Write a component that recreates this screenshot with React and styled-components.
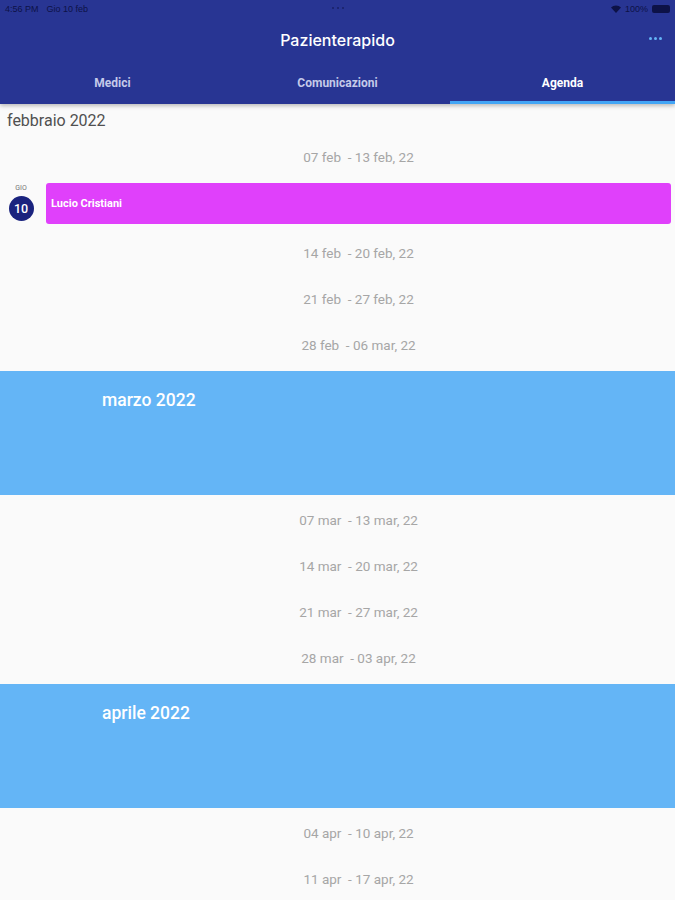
import React from "react";
import styled, { createGlobalStyle } from "styled-components";

const Global = createGlobalStyle`
  html, body { margin: 0; padding: 0; background: #fafafa; }
  body { font-family: Roboto, "Noto Sans", sans-serif; width: 675px; overflow: hidden; }
  * { box-sizing: border-box; }
`;

const Page = styled.div`
  width: 675px;
  height: 900px;
  overflow: hidden;
  background: #fafafa;
`;

const Header = styled.header`
  background: #283593;
  box-shadow: 0 2px 4px rgba(0,0,0,0.25);
  position: relative;
  z-index: 1;
`;

const StatusBar = styled.div`
  height: 18px;
  display: flex;
  align-items: center;
  justify-content: space-between;
  padding: 0 5px;
  font-family: "Liberation Sans", Arial, sans-serif;
  font-size: 9px;
  color: #0d1247;
  position: relative;
`;

const StatusLeft = styled.div`
  display: flex;
  gap: 8px;
`;

const StatusDots = styled.div`
  position: absolute;
  left: 50%;
  top: 7px;
  transform: translateX(-50%);
  display: flex;
  gap: 3px;
`;

const Dot = styled.span`
  width: 2px;
  height: 2px;
  border-radius: 50%;
  background: rgba(13,18,71,0.6);
`;

const StatusRight = styled.div`
  display: flex;
  align-items: center;
  gap: 4px;
`;

const Battery = styled.span`
  width: 18px;
  height: 8px;
  background: #0d1247;
  border-radius: 2px;
`;

const TitleRow = styled.div`
  height: 44px;
  display: flex;
  align-items: center;
  justify-content: center;
  position: relative;
`;

const Title = styled.h1`
  margin: 0;
  font-size: 16px;
  font-weight: 500;
  color: #ffffff;
  font-family: Inter, Roboto, sans-serif;
`;

const MoreButton = styled.div`
  position: absolute;
  right: 13px;
  top: 19px;
  display: flex;
  gap: 2px;
`;

const MoreDot = styled.span`
  width: 3px;
  height: 3px;
  border-radius: 50%;
  background: #64b5f6;
`;

const Tabs = styled.nav`
  display: grid;
  grid-template-columns: repeat(3, 1fr);
  height: 42px;
`;

const Tab = styled.div`
  display: flex;
  align-items: center;
  justify-content: center;
  font-size: 12px;
  font-weight: 700;
  color: ${p => (p.$active ? "#ffffff" : "#c5cae9")};
  border-bottom: 3px solid ${p => (p.$active ? "#42a5f5" : "transparent")};
  padding-top: 2px;
`;

const MonthLabel = styled.div`
  height: 30px;
  padding: 7px 7px 0;
  font-size: 16px;
  line-height: 19px;
  color: #505050;
`;

const WeekRow = styled.div`
  height: 46px;
  display: flex;
  align-items: center;
  padding-left: 46px;
  padding-right: 4px;
`;

const WeekText = styled.div`
  flex: 1;
  text-align: center;
  font-size: 13.5px;
  color: #a6a6a6;
  white-space: pre;
`;

const EventRow = styled.div`
  height: 50px;
  display: flex;
  align-items: flex-start;
  padding: 3px 4px 0 0;
`;

const DayCol = styled.div`
  width: 46px;
  display: flex;
  flex-direction: column;
  align-items: center;
  padding: 1px 4px 0 0;
  gap: 4px;
`;

const DayName = styled.span`
  font-size: 7px;
  color: #757575;
`;

const DayNum = styled.span`
  width: 25px;
  height: 25px;
  border-radius: 50%;
  background: #1a237e;
  color: #fff;
  font-size: 12.5px;
  font-weight: 500;
  display: flex;
  align-items: center;
  justify-content: center;
`;

const EventCard = styled.div`
  flex: 1;
  height: 41px;
  background: #e040fb;
  border-radius: 3px;
  display: flex;
  align-items: center;
  padding-left: 5px;
  color: #fff;
  font-size: 11px;
  font-weight: 700;
`;

const MonthBanner = styled.div`
  height: 124px;
  margin: 3px 0 2px;
  background: #64b5f6;
  padding: 19px 0 0 102px;
  color: #ffffff;
  font-size: 17.5px;
  font-weight: 500;
`;

const Wifi = () => (
  <svg width="10" height="8" viewBox="0 0 10 8">
    <path d="M5 8 L0 2.5 A7 7 0 0 1 10 2.5 Z" fill="#0d1247" />
  </svg>
);

const Week = ({ text }) => (
  <WeekRow>
    <WeekText>{text}</WeekText>
  </WeekRow>
);

export default function App() {
  return (
    <Page>
      <Global />
      <Header>
        <StatusBar>
          <StatusLeft>
            <span>4:56 PM</span>
            <span>Gio 10 feb</span>
          </StatusLeft>
          <StatusDots>
            <Dot />
            <Dot />
            <Dot />
          </StatusDots>
          <StatusRight>
            <Wifi />
            <span>100%</span>
            <Battery />
          </StatusRight>
        </StatusBar>
        <TitleRow>
          <Title>Pazienterapido</Title>
          <MoreButton>
            <MoreDot />
            <MoreDot />
            <MoreDot />
          </MoreButton>
        </TitleRow>
        <Tabs>
          <Tab>Medici</Tab>
          <Tab>Comunicazioni</Tab>
          <Tab $active>Agenda</Tab>
        </Tabs>
      </Header>
      <MonthLabel>febbraio 2022</MonthLabel>
      <Week text="07 feb  - 13 feb, 22" />
      <EventRow>
        <DayCol>
          <DayName>GIO</DayName>
          <DayNum>10</DayNum>
        </DayCol>
        <EventCard>Lucio Cristiani</EventCard>
      </EventRow>
      <Week text="14 feb  - 20 feb, 22" />
      <Week text="21 feb  - 27 feb, 22" />
      <Week text="28 feb  - 06 mar, 22" />
      <MonthBanner>marzo 2022</MonthBanner>
      <Week text="07 mar  - 13 mar, 22" />
      <Week text="14 mar  - 20 mar, 22" />
      <Week text="21 mar  - 27 mar, 22" />
      <Week text="28 mar  - 03 apr, 22" />
      <MonthBanner>aprile 2022</MonthBanner>
      <Week text="04 apr  - 10 apr, 22" />
      <Week text="11 apr  - 17 apr, 22" />
    </Page>
  );
}
